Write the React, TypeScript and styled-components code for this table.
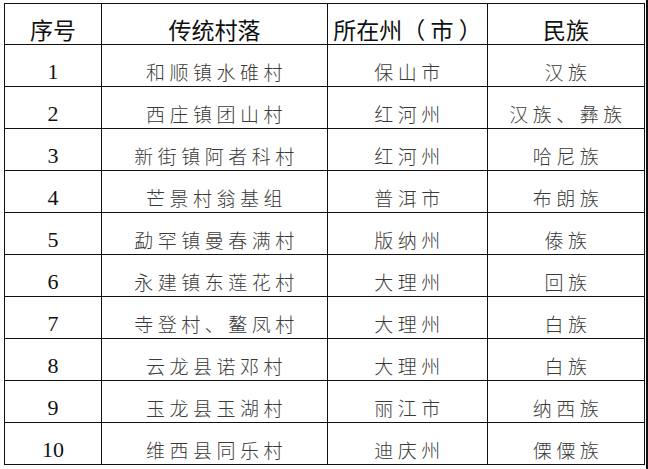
import {createGlobalStyle} from 'styled-components'
import styled from 'styled-components'

const GlobalStyle = createGlobalStyle`
  html, body {
    margin: 0;
    padding: 0;
    background: #fff;
  }
`

type Row = {no: string; village: string; city: string; people: string}

const rows: Row[] = [
  {no: '1', village: '和顺镇水碓村', city: '保山市', people: '汉族'},
  {no: '2', village: '西庄镇团山村', city: '红河州', people: '汉族、彝族'},
  {no: '3', village: '新街镇阿者科村', city: '红河州', people: '哈尼族'},
  {no: '4', village: '芒景村翁基组', city: '普洱市', people: '布朗族'},
  {no: '5', village: '勐罕镇曼春满村', city: '版纳州', people: '傣族'},
  {no: '6', village: '永建镇东莲花村', city: '大理州', people: '回族'},
  {no: '7', village: '寺登村、鳌凤村', city: '大理州', people: '白族'},
  {no: '8', village: '云龙县诺邓村', city: '大理州', people: '白族'},
  {no: '9', village: '玉龙县玉湖村', city: '丽江市', people: '纳西族'},
  {no: '10', village: '维西县同乐村', city: '迪庆州', people: '傈僳族'},
]

const Page = styled.div`
  width: 648px;
  height: 469px;
  box-sizing: border-box;
  padding: 3px 0 0 4px;
  border-right: 2px solid #111;
`

const Grid = styled.div`
  display: grid;
  grid-template-columns: 97px 226px 160px 157px;
  grid-template-rows: 41px repeat(10, 42px);
  width: 641px;
  box-sizing: border-box;
  border-left: 1px solid #111;
  border-top: 1px solid #111;
`

const HeadCell = styled.div`
  box-sizing: border-box;
  border-right: 1px solid #111;
  border-bottom: 1px solid #111;
  display: flex;
  justify-content: center;
  align-items: center;
  padding-top: 10px;
  font-family: 'Noto Sans CJK SC', sans-serif;
  font-size: 23px;
  color: #111;
  line-height: 1;
  white-space: pre;
`

const Cell = styled.div<{$num?: boolean}>`
  box-sizing: border-box;
  border-right: 1px solid #111;
  border-bottom: 1px solid #111;
  display: flex;
  justify-content: center;
  align-items: center;
  padding-top: 12px;
  line-height: 1;
  font-family: ${p => (p.$num ? "'Liberation Serif', serif" : "'Noto Sans CJK SC', sans-serif")};
  font-size: ${p => (p.$num ? '22px' : '19px')};
  font-weight: ${p => (p.$num ? 400 : 300)};
  letter-spacing: ${p => (p.$num ? '0' : '4.5px')};
  padding-left: ${p => (p.$num ? '0' : '4px')};
  color: ${p => (p.$num ? '#111' : '#3a3a3a')};
`

const App = () => {
  return (
    <Page>
      <GlobalStyle />
      <Grid>
        <HeadCell>序号</HeadCell>
        <HeadCell>传统村落</HeadCell>
        <HeadCell>{'所在州（ 市 ）'}</HeadCell>
        <HeadCell>民族</HeadCell>
        {rows.map(r => (
          <>
            <Cell key={r.no + 'n'} $num>
              {r.no}
            </Cell>
            <Cell key={r.no + 'v'}>{r.village}</Cell>
            <Cell key={r.no + 'c'}>{r.city}</Cell>
            <Cell key={r.no + 'p'}>{r.people}</Cell>
          </>
        ))}
      </Grid>
    </Page>
  )
}

export default App
